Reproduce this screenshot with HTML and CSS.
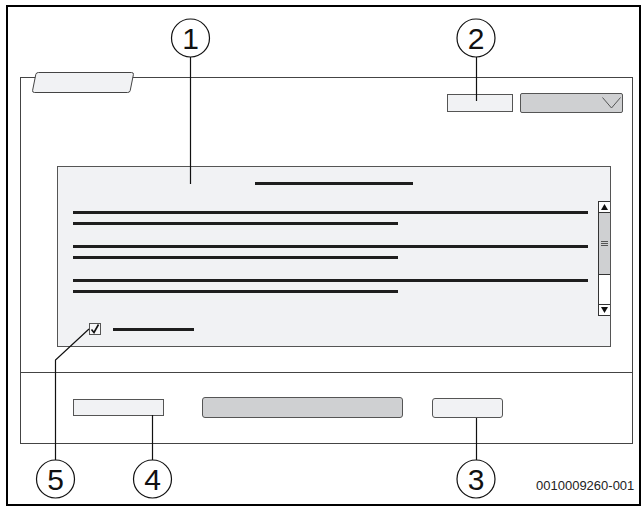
FILE: index.html
```html
<!DOCTYPE html>
<html lang="en">
<head>
    <meta charset="UTF-8">
    <meta name="viewport" content="width=device-width, initial-scale=1.0">
    <title>Dialog overview</title>
    <link rel="stylesheet" href="styles.css">
</head>
<body>
    <div class="figure">
        <div class="window">
            <!-- tab sits over the window's top border -->
            <svg class="tab" width="104" height="23" viewBox="0 0 104 23">
                <path d="M7.5 1.5 H100.5 Q102.8 1.5 102.4 3.6 L99.2 19.6 Q98.8 21.5 96.6 21.5 H3.5 Q1.2 21.5 1.6 19.4 L4.8 3.4 Q5.2 1.5 7.5 1.5 Z" fill="#f1f2f4" stroke="#444" stroke-width="1"/>
            </svg>

            <div class="window-main">
                <div class="toolbar">
                    <div class="btn btn-small"></div>
                    <div class="dropdown">
                        <svg width="19" height="12" viewBox="0 0 19 12">
                            <path d="M0.5 0.5 L9.5 11 L18.5 0.5" fill="none" stroke="#555" stroke-width="1"/>
                        </svg>
                    </div>
                </div>

                <div class="panel">
                    <div class="panel-title"></div>
                    <div class="panel-body">
                        <div class="panel-text">
                            <div class="para">
                                <div class="line"></div>
                                <div class="line short"></div>
                            </div>
                            <div class="para">
                                <div class="line"></div>
                                <div class="line short"></div>
                            </div>
                            <div class="para">
                                <div class="line"></div>
                                <div class="line short"></div>
                            </div>
                        </div>
                        <div class="scrollbar">
                            <div class="scroll-btn scroll-up">
                                <svg width="7" height="6" viewBox="0 0 7 6"><path d="M3.5 0 L7 6 H0 Z" fill="#111"/></svg>
                            </div>
                            <div class="scroll-thumb"><span class="grip"></span></div>
                            <div class="scroll-track"></div>
                            <div class="scroll-btn scroll-down">
                                <svg width="7" height="6" viewBox="0 0 7 6"><path d="M0 0 H7 L3.5 6 Z" fill="#111"/></svg>
                            </div>
                        </div>
                    </div>
                    <div class="panel-check">
                        <span class="checkbox">
                            <svg width="10" height="10" viewBox="0 0 10 10">
                                <path d="M1.5 5.5 L4 8.5 L8.5 0.5" fill="none" stroke="#111" stroke-width="1.6"/>
                            </svg>
                        </span>
                        <span class="line check-label"></span>
                    </div>
                </div>
            </div>

            <div class="window-footer">
                <div class="btn btn-back"></div>
                <div class="btn btn-wide"></div>
                <div class="btn btn-ok"></div>
            </div>
        </div>
    </div>

    <!-- numbered callouts drawn over the screen -->
    <svg class="callouts" width="643" height="508" viewBox="0 0 643 508">
        <g fill="none" stroke="#111" stroke-width="1.2">
            <path d="M190.5 57 V184"/>
            <path d="M476.5 57 V101"/>
            <path d="M476.5 418 V460"/>
            <path d="M152.5 415 V460"/>
            <path d="M89 329 L55.5 360 V460"/>
            <circle cx="190.5" cy="38" r="19"/>
            <circle cx="476" cy="38" r="19"/>
            <circle cx="55.5" cy="479" r="19"/>
            <circle cx="152.5" cy="479" r="19"/>
            <circle cx="476" cy="479" r="19"/>
        </g>
        <g class="callout-num" text-anchor="middle">
            <text x="190.5" y="49">1</text>
            <text x="476" y="49">2</text>
            <text x="476" y="490">3</text>
            <text x="152.5" y="490">4</text>
            <text x="55.5" y="490">5</text>
        </g>
        <text class="figure-code" x="536" y="490">0010009260-001</text>
    </svg>
</body>
</html>
```

FILE: styles.css
```css
body {
    font-family: "Liberation Sans", Arial, sans-serif;
    margin: 0;
    padding: 0;
    background-color: #fff;
    position: relative;
    width: 643px;
    height: 508px;
    overflow: hidden;
}

.figure {
    box-sizing: border-box;
    margin: 5px 0 0 6px;
    width: 635px;
    height: 501px;
    border: 2px solid #000;
    padding: 70px 0 0 12px;
}

.window {
    position: relative;
    box-sizing: border-box;
    width: 613px;
    height: 367px;
    border: 1px solid #444;
    display: flex;
    flex-direction: column;
}

.tab {
    position: absolute;
    left: 10px;
    top: -7px;
}

.window-main {
    box-sizing: border-box;
    height: 294px;
    padding: 15px 9px 0 36px;
}

.toolbar {
    display: flex;
    justify-content: flex-end;
    align-items: center;
    gap: 7px;
    height: 20px;
}

.btn {
    box-sizing: border-box;
    border: 1px solid #555;
    background-color: #f1f2f4;
}

.btn-small {
    width: 66px;
    height: 18px;
}

.dropdown {
    box-sizing: border-box;
    width: 103px;
    height: 20px;
    border: 1px solid #555;
    border-radius: 2px;
    background-color: #cfd0d2;
    display: flex;
    justify-content: flex-end;
    align-items: flex-start;
    padding: 3px 1px 0 0;
}

.panel {
    box-sizing: border-box;
    margin: 53px 12px 0 0;
    height: 181px;
    border: 1px solid #555;
    background-color: #f1f2f4;
}

.panel-title {
    width: 158px;
    height: 3px;
    margin: 15px auto 0;
    background-color: #1e1e1e;
}

.panel-body {
    display: flex;
    align-items: flex-start;
    margin-top: 16px;
}

.panel-text {
    flex: 1;
    padding: 10px 10px 0 15px;
    display: flex;
    flex-direction: column;
    gap: 20px;
}

.para {
    display: flex;
    flex-direction: column;
    gap: 8px;
}

.line {
    height: 3px;
    background-color: #1e1e1e;
}

.line.short {
    width: 325px;
}

.scrollbar {
    box-sizing: border-box;
    width: 12px;
    height: 115px;
    border: 1px solid #333;
    border-right: none;
    display: flex;
    flex-direction: column;
    background-color: #fff;
}

.scroll-btn {
    height: 10px;
    display: flex;
    justify-content: center;
    align-items: center;
}

.scroll-up {
    border-bottom: 1px solid #333;
}

.scroll-down {
    border-top: 1px solid #333;
}

.scroll-thumb {
    height: 61px;
    border-bottom: 1px solid #333;
    background-color: #cfd0d2;
    display: flex;
    justify-content: center;
    align-items: center;
}

.grip {
    width: 7px;
    height: 5px;
    border-top: 1px solid #555;
    border-bottom: 1px solid #555;
    box-sizing: border-box;
    position: relative;
}

.grip::after {
    content: "";
    position: absolute;
    left: 0;
    right: 0;
    top: 1px;
    height: 1px;
    background-color: #555;
}

.scroll-track {
    flex: 1;
}

.panel-check {
    display: flex;
    align-items: center;
    gap: 12px;
    margin-top: 7px;
    padding-left: 31px;
}

.checkbox {
    box-sizing: border-box;
    width: 12px;
    height: 12px;
    border: 1px solid #555;
    background-color: #f7f7f8;
    display: flex;
    justify-content: center;
    align-items: center;
}

.check-label {
    width: 81px;
}

.window-footer {
    flex: 1;
    border-top: 1px solid #444;
    display: flex;
    align-items: center;
    padding: 0 0 1px 52px;
}

.btn-back {
    width: 91px;
    height: 17px;
}

.btn-wide {
    width: 201px;
    height: 21px;
    margin-left: 38px;
    border-radius: 3px;
    background-color: #cfd0d2;
}

.btn-ok {
    width: 71px;
    height: 20px;
    margin-left: 29px;
    border-radius: 3px;
}

.callouts {
    position: absolute;
    left: 0;
    top: 0;
    pointer-events: none;
}

.callout-num {
    font-family: "Liberation Sans Narrow", "Liberation Sans", Arial, sans-serif;
    font-size: 30px;
    fill: #111;
}

.figure-code {
    font-family: "Liberation Sans", Arial, sans-serif;
    font-size: 13px;
    fill: #222;
}
```
